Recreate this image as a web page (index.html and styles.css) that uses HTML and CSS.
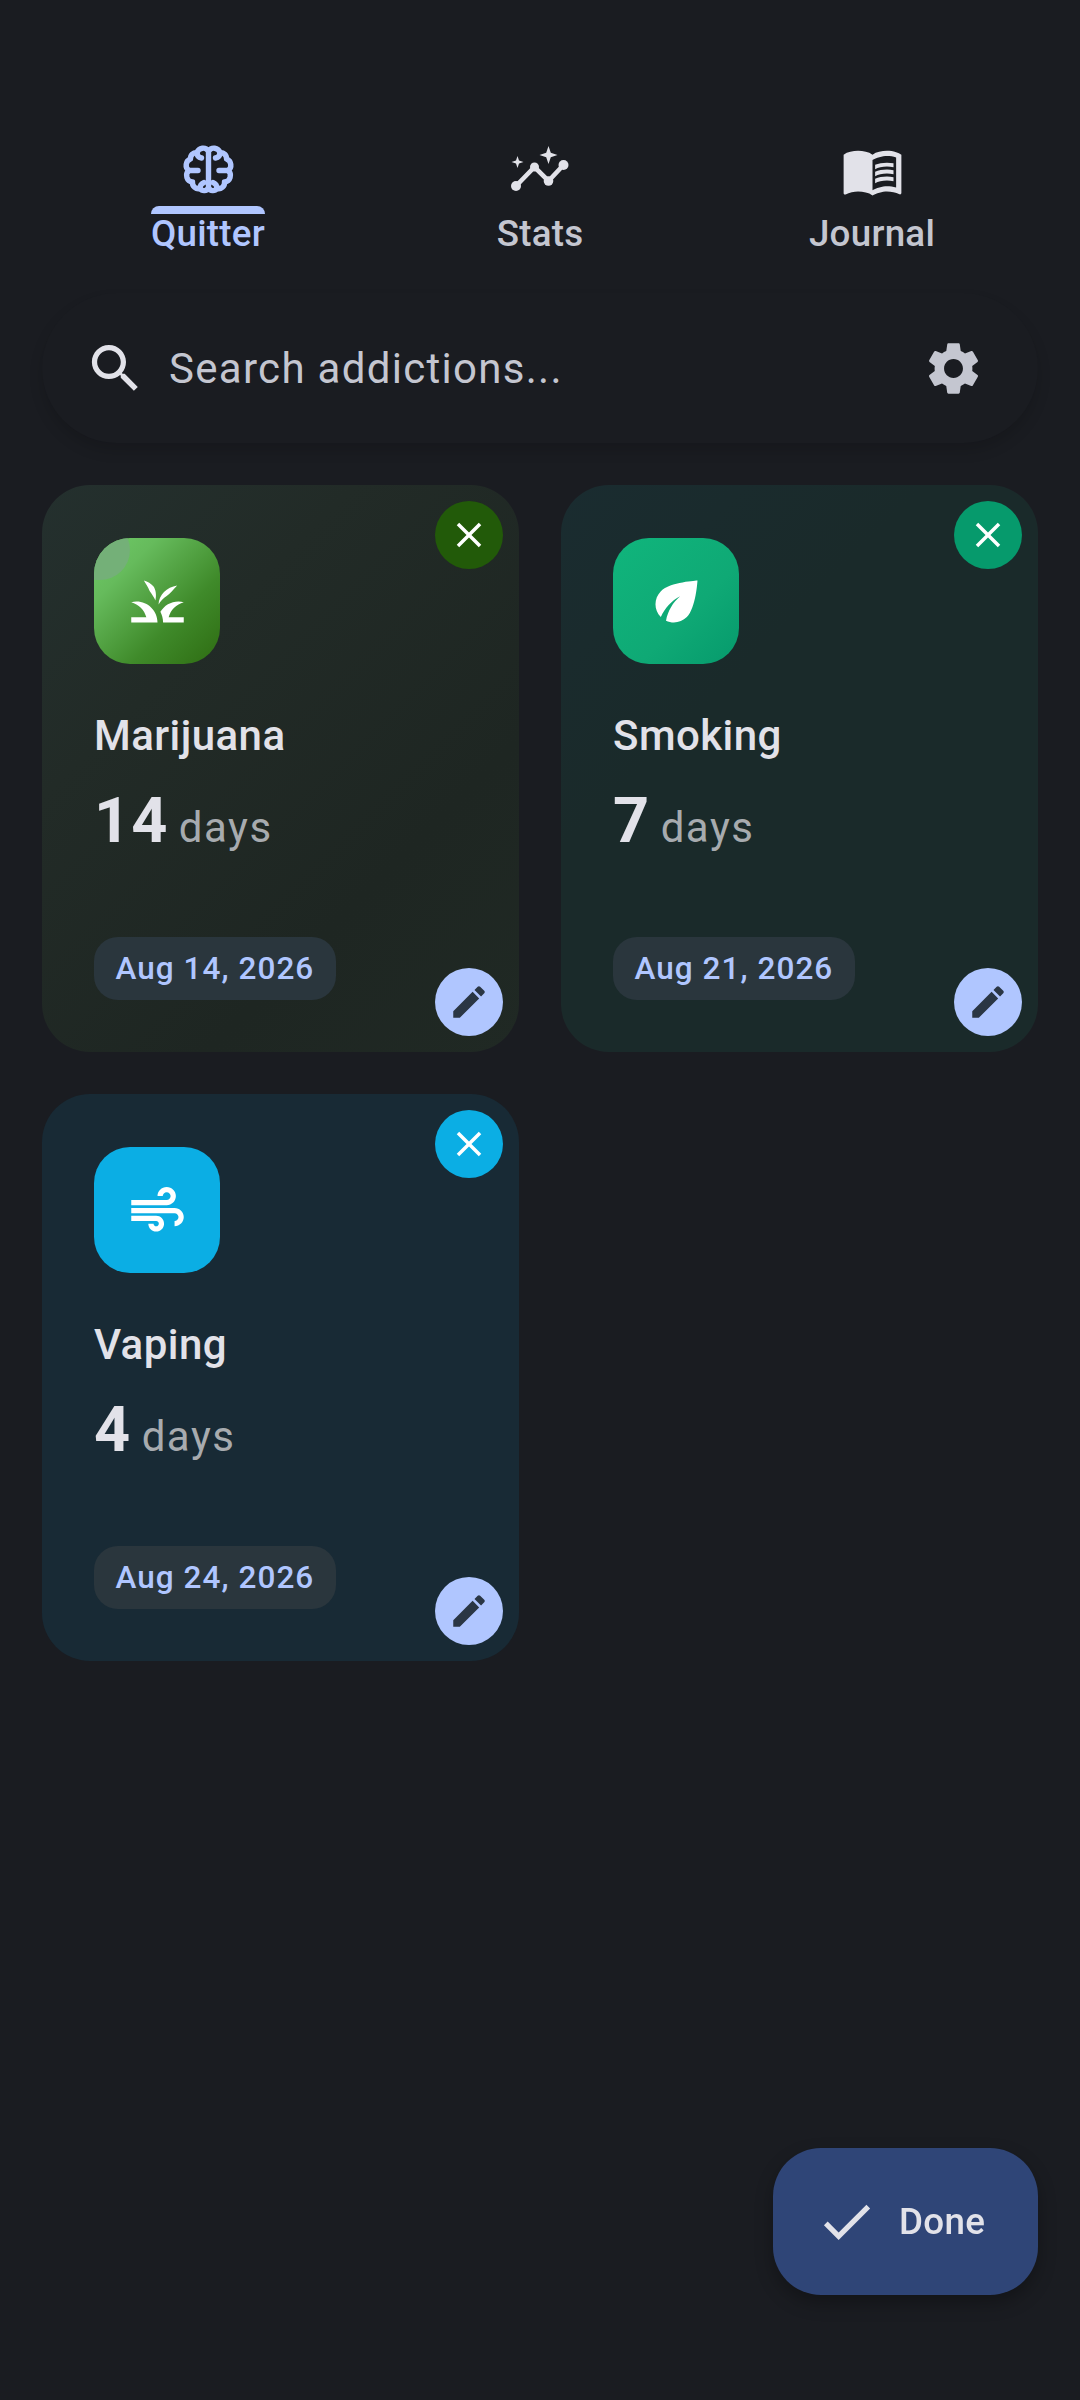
FILE: index.html
```html
<!DOCTYPE html>
<html lang="en">
<head>
<meta charset="utf-8">
<title>Quitter</title>
<link rel="stylesheet" href="styles.css">
</head>
<body>
<main class="screen">
  <nav class="tabs">
    <div class="tab tab-active">
      <svg class="tab-icon" viewBox="0 0 63 63"><g fill="none" stroke="currentColor" stroke-width="5.400" stroke-linecap="round" stroke-linejoin="round"><path d="M31.500 12v38"/><path d="M31.500 12A6.500 6.500 0 0 0 20 13.500 6 6 0 0 0 13.500 20 6.500 6.500 0 0 0 12 31.500 6.500 6.500 0 0 0 15.500 43 6 6 0 0 0 23 49.500 5 5 0 0 0 31.500 49"/><path d="M31.500 12A6.500 6.500 0 0 1 43 13.500 6 6 0 0 1 49.500 20 6.500 6.500 0 0 1 51 31.500 6.500 6.500 0 0 1 47.500 43 6 6 0 0 1 40 49.500 5 5 0 0 1 31.500 49"/><path d="M12 31.500h9M20 13.500c0 3 1.500 5 4.500 5.500M23 49.500c0-3 1.500-5 4-6"/><path d="M51 31.500h-9M43 13.500c0 3-1.500 5-4.500 5.500M40 49.500c0-3-1.500-5-4-6"/></g></svg>
      <span class="tab-bar"></span>
      <span class="tab-label">Quitter</span>
    </div>
    <div class="tab">
      <svg class="tab-icon" viewBox="0 0 63 63"><g fill="currentColor"><path d="M39.500 7l2.300 6.700 6.700 2.300-6.700 2.300-2.300 6.700-2.300-6.700-6.700-2.300 6.700-2.300z"/><path d="M8.500 17l1.500 4.500 4.500 1.500-4.500 1.500-1.500 4.500-1.500-4.500-4.500-1.500 4.500-1.500z"/><circle cx="7" cy="47" r="5"/><circle cx="25.500" cy="28" r="4.500"/><circle cx="39.500" cy="42" r="4.800"/><circle cx="54.500" cy="26" r="5"/></g><path d="M7 47l18.500-19 14 14 15-16" fill="none" stroke="currentColor" stroke-width="4.600"/></svg>
      <span class="tab-spacer"></span>
      <span class="tab-label">Stats</span>
    </div>
    <div class="tab">
      <svg class="tab-icon" viewBox="0 0 24 24"><path fill="currentColor" d="M21 5c-1.110-.35-2.330-.5-3.500-.5-1.950 0-4.050.4-5.500 1.500-1.450-1.100-3.550-1.500-5.500-1.500S2.450 4.900 1 6v14.650c0 .25.25.5.5.5.1 0 .15-.05.25-.05C3.100 20.450 5.050 20 6.500 20c1.950 0 4.050.4 5.500 1.500 1.350-.85 3.800-1.500 5.500-1.500 1.650 0 3.350.3 4.750 1.050.1.05.15.05.25.05.25 0 .5-.25.5-.5V6c-.6-.45-1.250-.75-2-1zm0 13.500c-1.100-.35-2.300-.5-3.500-.5-1.700 0-4.150.65-5.500 1.500V8c1.350-.85 3.800-1.500 5.500-1.500 1.200 0 2.400.15 3.500.5v11.500z"/><path fill="currentColor" d="M17.500 10.500c.88 0 1.730.09 2.500.26V9.240c-.79-.15-1.640-.24-2.500-.24-1.700 0-3.240.29-4.500.83v1.660c1.130-.64 2.700-.99 4.500-.99zM13 12.490v1.660c1.130-.64 2.700-.99 4.500-.99.88 0 1.730.09 2.500.26V11.900c-.79-.15-1.640-.24-2.500-.24-1.700 0-3.240.3-4.500.83zM17.500 14.330c-1.700 0-3.240.29-4.500.83v1.660c1.130-.64 2.700-.99 4.500-.99.88 0 1.730.09 2.500.26v-1.520c-.79-.16-1.640-.24-2.500-.24z"/></svg>
      <span class="tab-spacer"></span>
      <span class="tab-label">Journal</span>
    </div>
  </nav>

  <div class="search">
    <svg class="search-icon" viewBox="0 0 24 24"><path fill="currentColor" d="M15.500 14h-.79l-.28-.27C15.410 12.590 16 11.110 16 9.500 16 5.910 13.090 3 9.500 3S3 5.910 3 9.500 5.910 16 9.500 16c1.610 0 3.090-.59 4.230-1.570l.27.28v.79l5 4.990L20.490 19l-4.990-5zm-6 0C7.010 14 5 11.990 5 9.500S7.010 5 9.500 5 14 7.010 14 9.500 11.990 14 9.500 14z"/></svg>
    <span class="search-text">Search addictions...</span>
    <svg class="gear-icon" viewBox="0 0 24 24"><path fill="currentColor" d="M19.140 12.940c.04-.3.06-.61.06-.94 0-.32-.02-.64-.07-.94l2.030-1.580c.18-.14.23-.41.12-.61l-1.920-3.320c-.12-.22-.37-.29-.59-.22l-2.390.96c-.5-.38-1.030-.7-1.620-.94l-.36-2.540c-.04-.24-.24-.41-.48-.41h-3.840c-.24 0-.43.17-.47.41l-.36 2.540c-.59.24-1.130.57-1.620.94l-2.390-.96c-.22-.08-.47 0-.59.22L2.740 8.870c-.12.21-.08.47.12.61l2.030 1.580c-.05.3-.09.63-.09.94s.02.64.07.94l-2.030 1.580c-.18.14-.23.41-.12.61l1.920 3.320c.12.22.37.29.59.22l2.390-.96c.5.38 1.030.7 1.620.94l.36 2.540c.05.24.24.41.48.41h3.840c.24 0 .44-.17.47-.41l.36-2.540c.59-.24 1.130-.56 1.620-.94l2.390.96c.22.08.47 0 .59-.22l1.920-3.320c.12-.22.07-.47-.12-.61l-2.010-1.580zM12 15.600c-1.980 0-3.600-1.620-3.600-3.600s1.620-3.600 3.600-3.600 3.600 1.620 3.600 3.600-1.620 3.600-3.600 3.600z"/></svg>
  </div>

  <section class="cards">
    <article class="card card-grass">
      <button class="close close-grass"><svg viewBox="0 0 24 24"><path fill="currentColor" d="M19 6.410L17.590 5 12 10.590 6.410 5 5 6.410 10.590 12 5 17.590 6.410 19 12 13.410 17.590 19 19 17.590 13.410 12z"/></svg></button>
      <div class="badge badge-grass"><svg viewBox="0 0 24 24"><path fill="currentColor" d="M12 20H2v-2h5.750C7.020 15.190 4.810 12.990 2 12.260 2.640 12.100 3.310 12 4 12c4.420 0 8 3.580 8 8zM22 12.260c-.64-.16-1.310-.26-2-.26-2.940 0-5.510 1.590-6.900 3.950.61 1.230.99 2.610 1.030 4.050H22v-2h-5.750c.73-2.810 2.940-5.010 5.750-5.740zM19.500 5.900C15.500 6.500 12.500 9.500 12.400 13.100 13.200 11.800 14.200 10.800 15.500 9.900 16.800 9 18 7.500 19.500 5.900zM6.800 4C7.500 5.200 8.500 6.500 9 8 9.800 9.200 10.700 10.400 11.200 11.600 11.700 9.500 11.300 7.500 10.500 6.300 9.500 5.100 8.300 4.500 6.800 4z"/></svg></div>
      <h2 class="name">Marijuana</h2>
      <p class="count"><strong class="num">14</strong><span class="unit">days</span></p>
      <span class="chip">Aug 14, 2026</span>
      <button class="edit"><svg viewBox="0 0 24 24"><path fill="currentColor" d="M3 17.250V21h3.750L17.810 9.940l-3.750-3.750L3 17.250zM20.710 7.040c.39-.39.39-1.020 0-1.410l-2.340-2.340c-.39-.39-1.020-.39-1.410 0l-1.830 1.830 3.750 3.750 1.830-1.830z"/></svg></button>
    </article>

    <article class="card card-leaf">
      <button class="close close-leaf"><svg viewBox="0 0 24 24"><path fill="currentColor" d="M19 6.410L17.590 5 12 10.590 6.410 5 5 6.410 10.590 12 5 17.590 6.410 19 12 13.410 17.590 19 19 17.590 13.410 12z"/></svg></button>
      <div class="badge badge-leaf"><svg viewBox="0 0 24 24"><path fill="currentColor" d="M6.050 8.050c-2.730 2.730-2.730 7.150-.02 9.880 1.470-3.400 4.090-6.240 7.360-7.930-2.770 2.340-4.710 5.610-5.390 9.320 2.600 1.230 5.800.78 7.950-1.370C19.430 14.470 20 4 20 4S9.530 4.570 6.050 8.050z"/></svg></div>
      <h2 class="name">Smoking</h2>
      <p class="count"><strong class="num">7</strong><span class="unit">days</span></p>
      <span class="chip">Aug 21, 2026</span>
      <button class="edit"><svg viewBox="0 0 24 24"><path fill="currentColor" d="M3 17.250V21h3.750L17.810 9.940l-3.750-3.750L3 17.250zM20.710 7.040c.39-.39.39-1.020 0-1.410l-2.340-2.340c-.39-.39-1.020-.39-1.410 0l-1.830 1.830 3.750 3.750 1.830-1.830z"/></svg></button>
    </article>

    <article class="card card-air">
      <button class="close close-air"><svg viewBox="0 0 24 24"><path fill="currentColor" d="M19 6.410L17.590 5 12 10.590 6.410 5 5 6.410 10.590 12 5 17.590 6.410 19 12 13.410 17.590 19 19 17.590 13.410 12z"/></svg></button>
      <div class="badge badge-air"><svg viewBox="0 0 24 24"><path fill="currentColor" d="M14.500 17c0 1.650-1.350 3-3 3s-3-1.350-3-3h2c0 .55.45 1 1 1s1-.45 1-1-.45-1-1-1H2v-2h9.500c1.650 0 3 1.350 3 3zM19 6.500C19 4.570 17.430 3 15.500 3S12 4.570 12 6.500h2c0-.83.67-1.500 1.500-1.500s1.500.67 1.500 1.500S16.330 8 15.500 8H2v2h13.500c1.930 0 3.500-1.570 3.500-3.500zm-.5 4.500H2v2h16.500c.83 0 1.500.67 1.500 1.500s-.67 1.500-1.500 1.500v2c1.930 0 3.500-1.570 3.500-3.500S20.430 11 18.500 11z"/></svg></div>
      <h2 class="name">Vaping</h2>
      <p class="count"><strong class="num">4</strong><span class="unit">days</span></p>
      <span class="chip">Aug 24, 2026</span>
      <button class="edit"><svg viewBox="0 0 24 24"><path fill="currentColor" d="M3 17.250V21h3.750L17.810 9.940l-3.750-3.750L3 17.250zM20.710 7.040c.39-.39.39-1.020 0-1.410l-2.340-2.340c-.39-.39-1.020-.39-1.410 0l-1.830 1.830 3.750 3.750 1.830-1.830z"/></svg></button>
    </article>
  </section>

  <button class="fab">
    <svg class="fab-icon" viewBox="0 0 24 24"><path fill="currentColor" d="M9 16.170L4.830 12l-1.420 1.410L9 19 21 7l-1.410-1.410z"/></svg>
    <span>Done</span>
  </button>
</main>
</body>
</html>
```

FILE: styles.css
```css
* { box-sizing: border-box; }
html, body { margin: 0; padding: 0; }
body {
  background: #1a1c21;
  font-family: Roboto, "Noto Sans", sans-serif;
  color: #e2e2e9;
}
.screen {
  width: 1080px;
  height: 2400px;
  padding: 139px 42px 0;
  overflow: hidden;
}

/* Tabs */
.tabs { display: grid; grid-template-columns: repeat(3, 1fr); }
.tab {
  display: flex;
  flex-direction: column;
  align-items: center;
  color: #e2e2e9;
}
.tab-icon { width: 63px; height: 63px; display: block; }
.tab-bar {
  width: 114px;
  height: 8px;
  margin-top: 4px;
  background: #b0c6ff;
  border-radius: 8px 8px 0 0;
}
.tab-spacer { height: 12px; }
.tab-label {
  font-size: 36.75px;
  line-height: 40px;
  font-weight: 500;
  letter-spacing: .25px;
  color: #c4c6d0;
}
.tab-active .tab-icon, .tab-active .tab-label { color: #b0c6ff; }

/* Search */
.search {
  height: 150px;
  margin-top: 39px;
  padding: 0 53px 0 42px;
  display: flex;
  align-items: center;
  border-radius: 75px;
  background: #1a1c21;
  box-shadow: 0 8px 14px rgba(0, 0, 0, .14);
  color: #c4c6d0;
}
.search-icon { width: 63px; height: 63px; color: #e2e2e9; }
.search-text {
  margin-left: 22px;
  flex: 1;
  font-size: 42px;
  letter-spacing: 1.3px;
}
.gear-icon { width: 63px; height: 63px; }

/* Cards */
.cards {
  display: grid;
  grid-template-columns: 477px 477px;
  gap: 42px;
  margin-top: 42px;
}
.card {
  position: relative;
  height: 567px;
  padding: 53px 52px 52px;
  border-radius: 48px;
  display: flex;
  flex-direction: column;
  align-items: flex-start;
}
.card-grass { background: linear-gradient(135deg, #24302e 0%, #222b27 30%, #1e2622 70%, #202924 100%); }
.card-leaf { background: linear-gradient(135deg, #1a2c30 0%, #1a2a2a 35%, #1a2a2a 100%); }
.card-air { background: #182a35; }

.badge {
  position: relative;
  width: 126px;
  height: 126px;
  border-radius: 36px;
  display: flex;
  align-items: center;
  justify-content: center;
  overflow: hidden;
  color: #fff;
}
.badge svg { position: relative; width: 63px; height: 63px; display: block; }
.badge-grass { background: linear-gradient(135deg, #6fcc68 0%, #66bb5c 25%, #3f8a2a 65%, #2e6c12 100%); }
.badge-grass::before {
  content: "";
  position: absolute;
  left: -24px;
  top: -18px;
  width: 60px;
  height: 60px;
  border-radius: 50%;
  background: #74b078;
}
.badge-leaf { background: linear-gradient(135deg, #10b57c 0%, #0fa975 60%, #069a6c 100%); }
.badge-air { background: #0baee4; }

.name {
  margin: 44px 0 0;
  font-size: 42px;
  line-height: 56px;
  font-weight: 500;
  letter-spacing: .45px;
  color: #e2e2e9;
}
.count {
  margin: 20px 0 0;
  display: flex;
  align-items: baseline;
  gap: 10.5px;
}
.num {
  font-size: 63px;
  line-height: 74px;
  font-weight: 700;
  letter-spacing: 1px;
  color: #e2e2e9;
}
.unit {
  font-size: 42px;
  letter-spacing: 1.5px;
  color: #a7abaf;
}
.chip {
  margin-top: auto;
  height: 63px;
  padding: 0 21.5px;
  display: flex;
  align-items: center;
  border-radius: 24px;
  background: #2a363d;
  font-size: 31.5px;
  font-weight: 500;
  letter-spacing: 1.05px;
  color: #b0c6ff;
}

.close, .edit {
  position: absolute;
  right: 16px;
  width: 68px;
  height: 68px;
  padding: 0;
  border: 0;
  border-radius: 50%;
  display: flex;
  align-items: center;
  justify-content: center;
}
.close { top: 16px; color: #fff; }
.close svg { width: 42px; height: 42px; }
.close-grass { background: #225a09; }
.close-leaf { background: #069a6c; }
.close-air { background: #0baee4; }
.edit { bottom: 16px; background: #b0c6ff; color: #2a3644; }
.edit svg { width: 42px; height: 42px; }

/* FAB */
.fab {
  position: fixed;
  left: 773px;
  top: 2148px;
  width: 265px;
  height: 147px;
  padding: 0 0 0 42px;
  border: 0;
  border-radius: 48px;
  display: flex;
  align-items: center;
  gap: 21px;
  background: #2f4577;
  box-shadow: 0 8px 18px rgba(0, 0, 0, .28);
  color: #e2e2e9;
  font-family: inherit;
  font-size: 36.75px;
  font-weight: 500;
  letter-spacing: .3px;
}
.fab-icon { width: 63px; height: 63px; }
```
